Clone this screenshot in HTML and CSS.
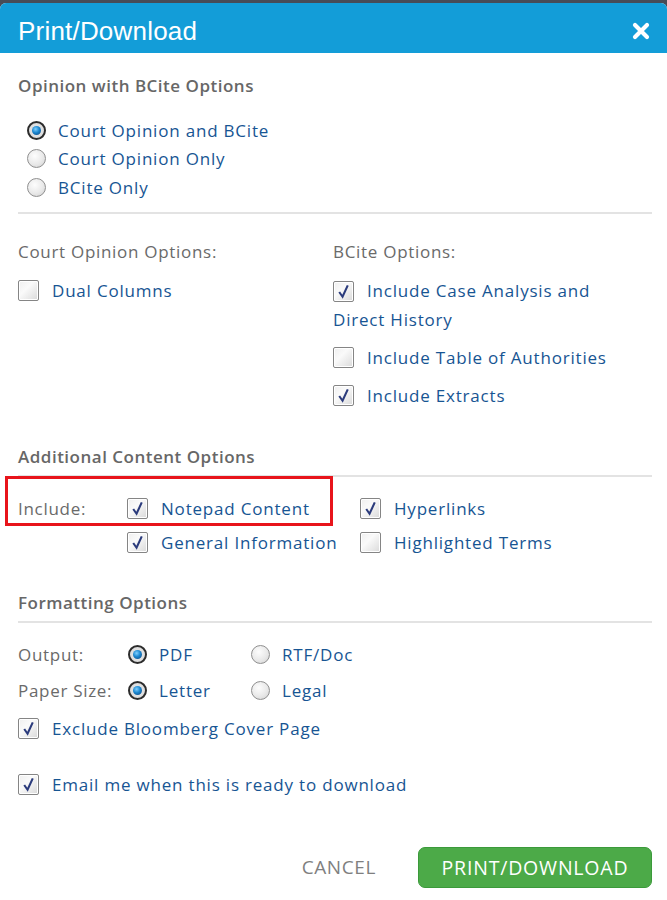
FILE: index.html
```html
<!DOCTYPE html>
<html>
<head>
<meta charset="utf-8">
<link rel="stylesheet" href="styles.css">
</head>
<body>
<div class="topbar"></div>
<div class="dialog">
  <header class="head">
    <h1 class="title">Print/Download</h1>
    <svg class="close" width="18" height="18" viewBox="0 0 18 18"><path d="M3 3L15 15M15 3L3 15" stroke="#fff" stroke-width="4.2" stroke-linecap="round"/></svg>
  </header>
  <div class="content">
    <section class="sec sec1">
      <h2 class="heading">Opinion with BCite Options</h2>
      <div class="radios">
        <label class="opt"><span class="radio on"></span>Court Opinion and BCite</label>
        <label class="opt"><span class="radio"></span>Court Opinion Only</label>
        <label class="opt"><span class="radio"></span>BCite Only</label>
      </div>
    </section>
    <hr class="rule">
    <section class="sec cols">
      <div class="col left">
        <div class="sublabel">Court Opinion Options:</div>
        <div class="item"><span class="cb"></span><span class="txt">Dual Columns</span></div>
      </div>
      <div class="col right">
        <div class="sublabel">BCite Options:</div>
        <div class="item wrap"><span class="cb on"><svg viewBox="0 0 20 20"><path d="M5.5 10.5L9 15.5L14.5 3.5" fill="none" stroke="#2b3b7c" stroke-width="2.2"/></svg></span><span class="txt">Include Case Analysis and Direct History</span></div>
        <div class="item"><span class="cb"></span><span class="txt">Include Table of Authorities</span></div>
        <div class="item"><span class="cb on"><svg viewBox="0 0 20 20"><path d="M5.5 10.5L9 15.5L14.5 3.5" fill="none" stroke="#2b3b7c" stroke-width="2.2"/></svg></span><span class="txt">Include Extracts</span></div>
      </div>
    </section>
    <section class="sec sec3">
      <h2 class="heading">Additional Content Options</h2>
      <hr class="rule thin">
      <div class="incl">
        <div class="flabel">Include:</div>
        <div class="item"><span class="cb on"><svg viewBox="0 0 20 20"><path d="M5.5 10.5L9 15.5L14.5 3.5" fill="none" stroke="#2b3b7c" stroke-width="2.2"/></svg></span><span class="txt">Notepad Content</span></div>
        <div class="item"><span class="cb on"><svg viewBox="0 0 20 20"><path d="M5.5 10.5L9 15.5L14.5 3.5" fill="none" stroke="#2b3b7c" stroke-width="2.2"/></svg></span><span class="txt">Hyperlinks</span></div>
        <div></div>
        <div class="item"><span class="cb on"><svg viewBox="0 0 20 20"><path d="M5.5 10.5L9 15.5L14.5 3.5" fill="none" stroke="#2b3b7c" stroke-width="2.2"/></svg></span><span class="txt">General Information</span></div>
        <div class="item"><span class="cb"></span><span class="txt">Highlighted Terms</span></div>
        <div class="highlight"></div>
      </div>
    </section>
    <section class="sec sec4">
      <h2 class="heading">Formatting Options</h2>
      <hr class="rule thin">
      <div class="fmt">
        <div class="flabel">Output:</div>
        <div class="item"><span class="radio on"></span><span class="txt">PDF</span></div>
        <div class="item"><span class="radio"></span><span class="txt">RTF/Doc</span></div>
        <div class="flabel">Paper Size:</div>
        <div class="item"><span class="radio on"></span><span class="txt">Letter</span></div>
        <div class="item"><span class="radio"></span><span class="txt">Legal</span></div>
      </div>
      <div class="item exclude"><span class="cb on"><svg viewBox="0 0 20 20"><path d="M5.5 10.5L9 15.5L14.5 3.5" fill="none" stroke="#2b3b7c" stroke-width="2.2"/></svg></span><span class="txt">Exclude Bloomberg Cover Page</span></div>
      <div class="item email"><span class="cb on"><svg viewBox="0 0 20 20"><path d="M5.5 10.5L9 15.5L14.5 3.5" fill="none" stroke="#2b3b7c" stroke-width="2.2"/></svg></span><span class="txt">Email me when this is ready to download</span></div>
    </section>
  </div>
  <footer class="foot">
    <button class="cancel">CANCEL</button>
    <button class="primary">PRINT/DOWNLOAD</button>
  </footer>
</div>
</body>
</html>
```
FILE: styles.css
```css
html, body { margin: 0; padding: 0; background: #fff; }
body { width: 667px; height: 900px; overflow: hidden; font-family: "Open Sans", "DejaVu Sans", sans-serif; }
.topbar { height: 8px; background: #474c57; margin-bottom: -5px; }
.dialog { position: relative; background: #fff; border-radius: 6px 6px 0 0; }
.head { height: 50px; box-sizing: border-box; padding: 6px 17px 0 18px; background: #139dd8; border-radius: 6px 6px 0 0; display: flex; align-items: center; justify-content: space-between; }
.title { margin: 0; font-family: "Liberation Sans", Arial, sans-serif; font-weight: normal; font-size: 26px; color: #fff; letter-spacing: 0.2px; }
.close { display: block; }
.content { padding: 0 15px 0 18px; }
.heading { margin: 0; font-size: 17px; line-height: 20px; font-weight: 600; color: #676767; letter-spacing: 0.5px; }
.sec1 { padding-top: 23px; }
.radios { margin-top: 20px; padding-left: 9px; display: flex; flex-direction: column; }
.opt { display: flex; align-items: center; height: 28.5px; font-size: 17px; color: #175593; letter-spacing: 0.8px; }
.opt .radio { margin-right: 12px; }
.rule { border: 0; border-top: 2px solid #e3e3e3; margin: 10px 0 0 0; height: 0; }
.rule.thin { margin-top: 8px; }
.cols { display: flex; padding-top: 28px; }
.col.left { width: 315px; }
.col.right { flex: 1; }
.sublabel { font-size: 17px; line-height: 20px; color: #6a6a6a; letter-spacing: 0.7px; margin-bottom: 14px; }
.item { display: flex; align-items: center; font-size: 17px; color: #175593; letter-spacing: 0.8px; line-height: 29px; }
.item .txt { margin-left: 13px; }
.col.right .item { margin-bottom: 9px; }
.col.right .item.wrap { display: block; max-width: 300px; }
.col.right .item.wrap .cb { display: inline-block; vertical-align: -5px; }
.cb { width: 21px; height: 21px; box-sizing: border-box; border: 1px solid #858585; border-radius: 2px; background: linear-gradient(135deg, #efefef 0%, #fafafa 40%, #d9d9d9 100%); box-shadow: inset 0 0 0 1px #fff; flex: none; position: relative; }
.cb svg { position: absolute; left: 0; top: 0; width: 19px; height: 19px; }
.radio { width: 19px; height: 19px; box-sizing: border-box; border-radius: 50%; border: 1px solid #8f8f8f; background: radial-gradient(circle at 40% 35%, #fdfdfd 0%, #e9e9e9 55%, #cfcfcf 100%); flex: none; position: relative; }
.radio.on { border: 2px solid #2c2c2c; background: radial-gradient(circle at 50% 50%, #e9e9e9 0%, #d8d8d8 100%); }
.radio.on::after { content: ""; position: absolute; left: 3px; top: 3px; width: 9px; height: 9px; border-radius: 50%; background: radial-gradient(circle at 40% 35%, #7fd0ff 0%, #1a86cf 45%, #0b3f7a 100%); }
.sec3 { padding-top: 28px; }
.incl { position: relative; display: grid; grid-template-columns: 109px 233px auto; row-gap: 5px; margin-top: 17px; }
.incl .item { line-height: 29px; }
.flabel { font-size: 17px; color: #6a6a6a; letter-spacing: 0.7px; line-height: 29px; display: flex; align-items: center; white-space: nowrap; }
.highlight { position: absolute; left: -13px; top: -18px; width: 328px; height: 50px; box-sizing: border-box; border: 3px solid #e8141b; }
.sec4 { padding-top: 36px; }
.fmt { display: grid; grid-template-columns: 110px 123px auto; row-gap: 7px; margin-top: 17px; }
.fmt .item .txt { margin-left: 12px; }
.exclude { margin-top: 9px; }
.email { margin-top: 27px; }
.foot { display: flex; justify-content: flex-end; align-items: center; padding: 48px 15px 0 0; }
.cancel { border: 0; background: none; font-family: "Open Sans", sans-serif; font-size: 19px; color: #7f7f7f; padding: 0; margin-right: 42px; letter-spacing: 0.6px; }
.primary { width: 234px; height: 41px; border: 1px solid #3b9a3a; border-radius: 7px; background: #4caa48; color: #fff; font-family: "Open Sans", sans-serif; font-size: 19.5px; letter-spacing: 0.8px; padding: 0; }
```
